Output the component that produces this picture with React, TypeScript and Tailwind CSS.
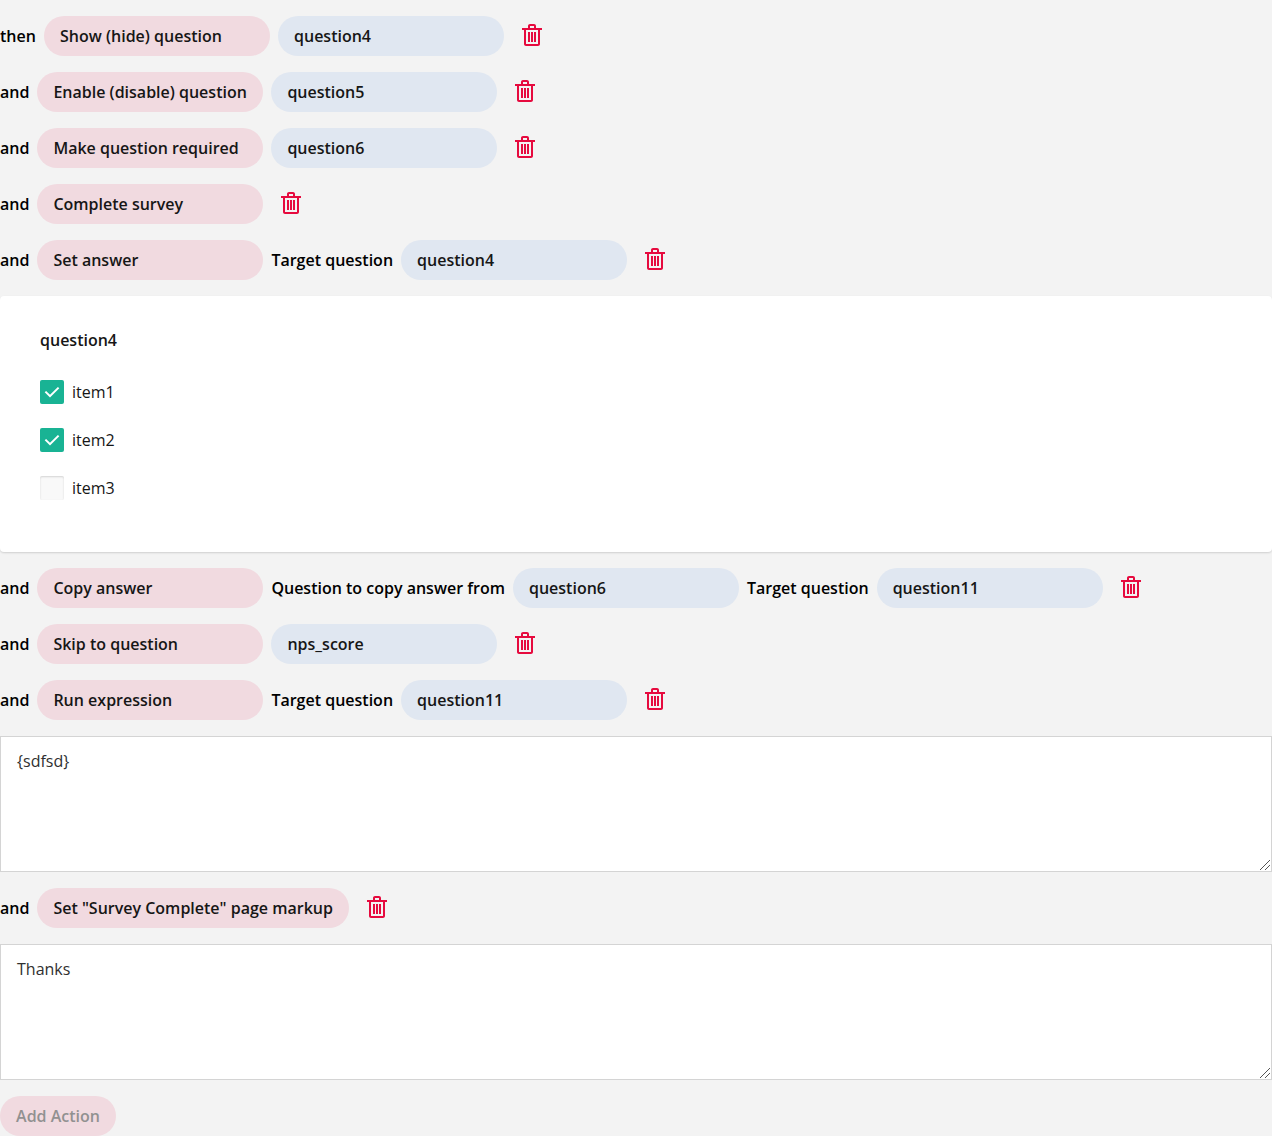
import React from "react";

function Trash() {
  return (
    <svg className="ml-2 block h-6 w-6 shrink-0" viewBox="0 0 24 24" fill="#e60a3e">
      <path fillRule="evenodd" d="M22 4H16V2C16 0.9 15.1 0 14 0H10C8.9 0 8 0.9 8 2V4H2V6H4V20C4 21.1 4.9 22 6 22H18C19.1 22 20 21.1 20 20V6H22V4ZM10 2H14V4H10V2ZM18 20H6V6H18V20ZM14 8H16V18H14V8ZM11 8H13V18H11V8ZM8 8H10V18H8V8Z" />
    </svg>
  );
}

function Pill({ children, blue, wide }: { children: string; blue?: boolean; wide?: boolean }) {
  return (
    <div
      className={`flex h-10 shrink-0 items-center rounded-full pl-4 text-[#161616] ${wide ? "w-[312px]" : "w-[226px]"} ${blue ? "bg-[#e0e7f1]" : "bg-[#f1dae0]"}`}
    >
      {children}
    </div>
  );
}

function Row({ first, children }: { first?: boolean; children: React.ReactNode }) {
  return (
    <div className="flex h-10 items-center gap-2 whitespace-nowrap">
      <span className={first ? "w-9" : "w-[29.4px]"}>{first ? "then" : "and"}</span>
      {children}
      <Trash />
    </div>
  );
}

function Check({ label, on }: { label: string; on?: boolean }) {
  return (
    <label className="flex h-6 items-center gap-2 font-normal text-[#161616]">
      <span className={`flex h-6 w-6 items-center justify-center rounded-[2px] ${on ? "bg-[#19b394]" : "bg-[#f9f9f9] shadow-[inset_0_1px_2px_rgba(0,0,0,0.15)]"}`}>
        {on && (
          <svg className="h-6 w-6" viewBox="0 0 24 24" fill="#fff">
            <path d="M10 17.6L4.7 12.3L6.1 10.9L10 14.8L17.9 6.9L19.3 8.3Z" />
          </svg>
        )}
      </span>
      {label}
    </label>
  );
}

function Area({ text }: { text: string }) {
  return (
    <div className="relative shrink-0">
      <textarea
        className="block h-[136px] w-full resize-none border border-[#d4d4d4] bg-white px-4 py-3 font-normal leading-6 text-[#303030] outline-none"
        defaultValue={text}
      />
      <svg className="pointer-events-none absolute bottom-[2px] right-[2px] h-[10px] w-[10px]" viewBox="0 0 10 10" fill="#555" shapeRendering="crispEdges">
        {[0, 1, 2, 3, 4, 5, 6, 7, 8, 9].map((i) => (
          <rect key={i} x={i} y={9 - i} width="1" height="1" />
        ))}
        {[5, 6, 7, 8, 9].map((i) => (
          <rect key={i + 10} x={i} y={14 - i} width="1" height="1" />
        ))}
      </svg>
    </div>
  );
}

export default function App() {
  return (
    <div className="flex h-[1136px] w-full flex-col gap-4 overflow-hidden bg-[#f3f3f3] pt-4 font-['Open_Sans',sans-serif] text-base font-semibold text-black">
      <Row first><Pill>Show (hide) question</Pill><Pill blue>question4</Pill></Row>
      <Row><Pill>Enable (disable) question</Pill><Pill blue>question5</Pill></Row>
      <Row><Pill>Make question required</Pill><Pill blue>question6</Pill></Row>
      <Row><Pill>Complete survey</Pill></Row>
      <Row><Pill>Set answer</Pill><span>Target question</span><Pill blue>question4</Pill></Row>
      <div className="h-64 shrink-0 rounded bg-white px-10 pt-8 shadow-[0_1px_2px_rgba(0,0,0,0.15)]">
        <div className="mb-7 leading-6 text-[#161616]">question4</div>
        <div className="flex flex-col gap-6">
          <Check label="item1" on />
          <Check label="item2" on />
          <Check label="item3" />
        </div>
      </div>
      <Row><Pill>Copy answer</Pill><span>Question to copy answer from</span><Pill blue>question6</Pill><span>Target question</span><Pill blue>question11</Pill></Row>
      <Row><Pill>Skip to question</Pill><Pill blue>nps_score</Pill></Row>
      <Row><Pill>Run expression</Pill><span>Target question</span><Pill blue>question11</Pill></Row>
      <Area text="{sdfsd}" />
      <Row><Pill wide>Set "Survey Complete" page markup</Pill></Row>
      <Area text="Thanks" />
      <button className="flex h-10 w-[116px] shrink-0 items-center justify-center rounded-full bg-[#f1dae0] text-[#919191]">Add Action</button>
    </div>
  );
}
